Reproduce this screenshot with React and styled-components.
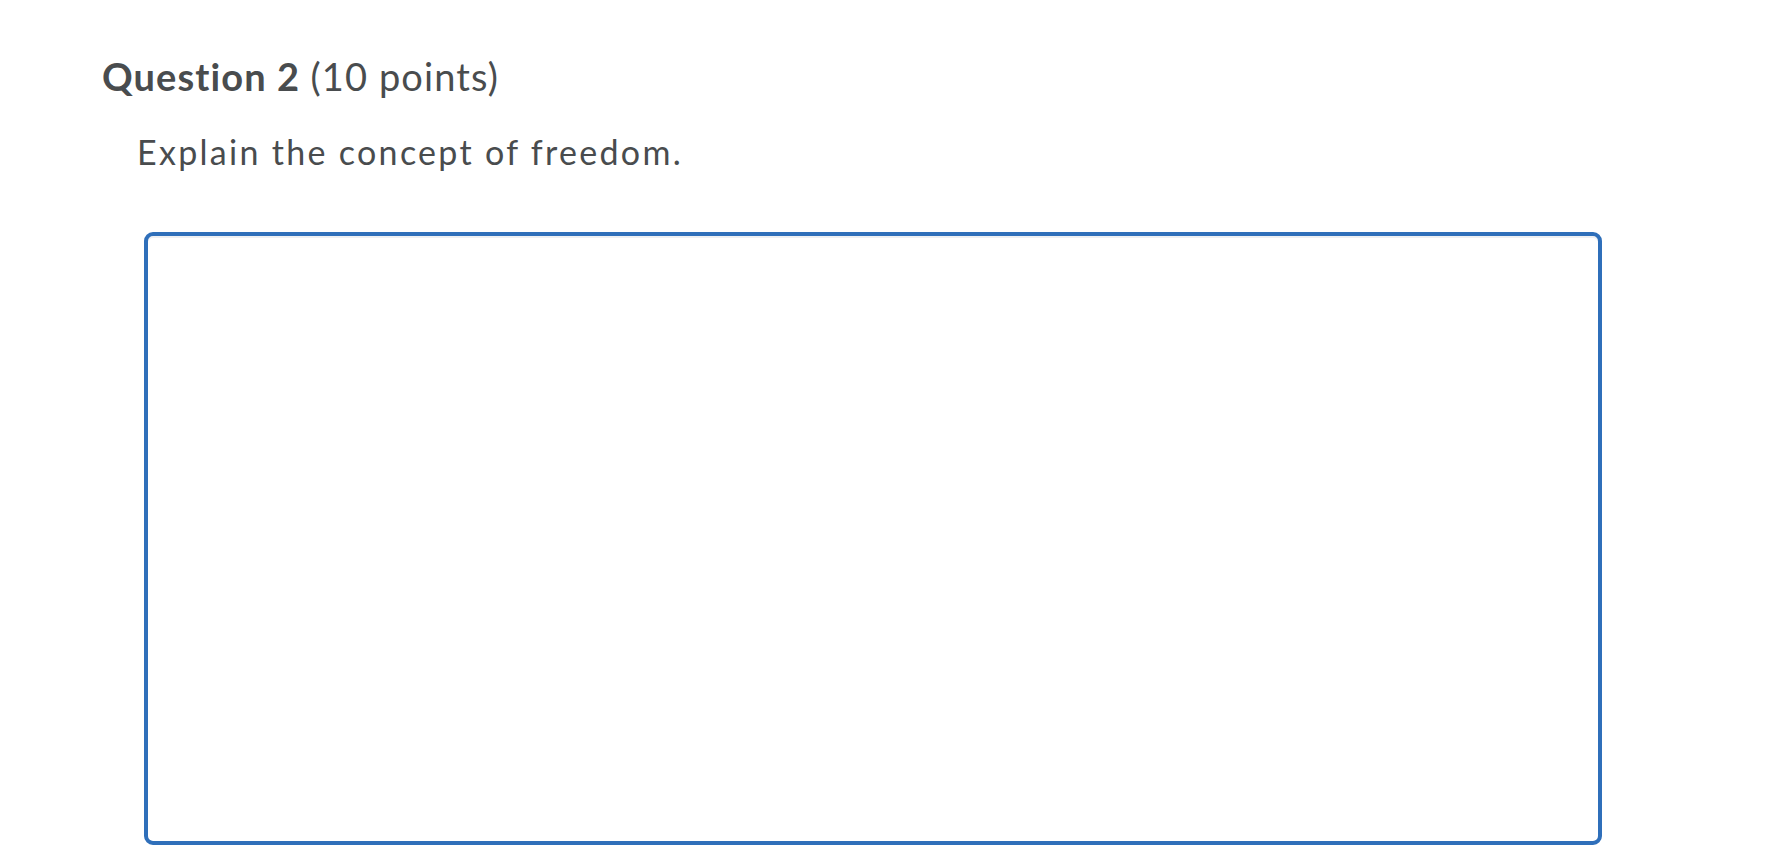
import React from "react";
import styled, { createGlobalStyle } from "styled-components";

const GlobalStyle = createGlobalStyle`
  body {
    margin: 0;
    background: #ffffff;
    font-family: Lato, "Liberation Sans", sans-serif;
    font-variant-ligatures: none;
    color: #494c4e;
  }
`;

const Page = styled.main`
  padding: 53px 0 0 102px;
`;

const Heading = styled.h2`
  margin: 0;
  font-size: 38px;
  line-height: 46px;
  letter-spacing: 1.1px;
  font-weight: 700;
  color: #494c4e;
`;

const Points = styled.span`
  font-weight: 400;
`;

const Body = styled.div`
  padding-left: 35px;
`;

const Prompt = styled.p`
  margin: 32px 0 0;
  font-size: 34px;
  line-height: 42px;
  letter-spacing: 2.3px;
  font-weight: 400;
`;

const Answer = styled.textarea`
  display: block;
  box-sizing: border-box;
  margin: 59px 0 0 7px;
  width: 1458px;
  height: 613px;
  border: 4px solid #2f6fba;
  border-radius: 9px;
  box-shadow: inset 0 2px 0 #eef0f3;
  outline: none;
  resize: none;
  font-family: inherit;
  font-size: 30px;
  color: #494c4e;
`;

export default function App() {
  return (
    <>
      <GlobalStyle />
      <Page>
        <Heading>
          Question 2 <Points>(10 points)</Points>
        </Heading>
        <Body>
          <Prompt>Explain the concept of freedom.</Prompt>
          <Answer aria-label="Answer" />
        </Body>
      </Page>
    </>
  );
}
